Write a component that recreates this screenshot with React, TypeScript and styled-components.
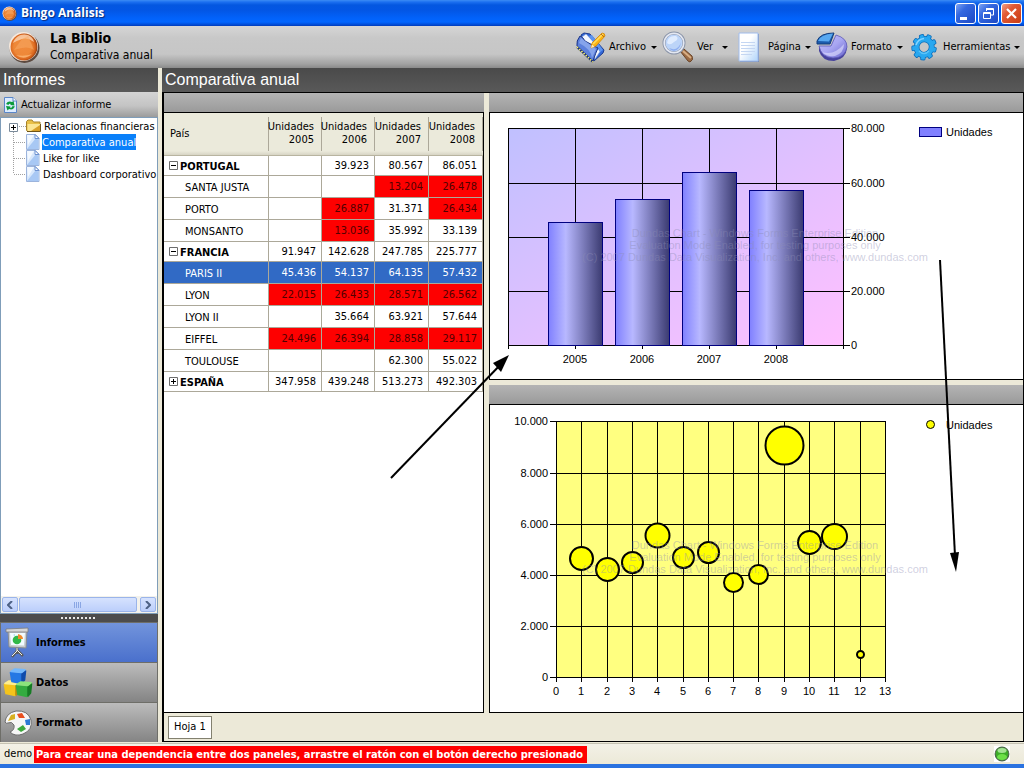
import React from 'react';
import styled, { createGlobalStyle, css } from 'styled-components';

const UI_FONT = '"DejaVu Sans Condensed", "DejaVu Sans", sans-serif';
const ARIAL = '"Liberation Sans", Arial, sans-serif';

const GlobalStyle = createGlobalStyle`
  * { box-sizing: border-box; }
  html, body { margin: 0; height: 100%; }
  body { font: 11px/14px ${UI_FONT}; color: #000; background: #ece9d8; }
  button { font: inherit; color: inherit; border: 0; padding: 0; margin: 0; background: none; cursor: default; }
`;

const Window = styled.div`
  position: relative;
  display: flex;
  flex-direction: column;
  min-height: 100vh;
  border-bottom: 4px solid #2a72e0;
  overflow: hidden;
`;

/* ---------- title bar ---------- */

const TitleBar = styled.header`
  display: flex;
  align-items: center;
  height: 26px;
  padding: 0 2px 0 2px;
  gap: 4px;
  background: linear-gradient(#3c8cf4 0, #1c70f0 2px, #0457e0 5px, #0356e4 10px, #0262fa 18px, #0266ff 22px, #0148d0 25px, #013ab8 26px);
`;

const WindowTitle = styled.h1`
  flex: 1;
  margin: 0;
  font: bold 12px/16px "Open Sans", sans-serif;
  color: #fff;
  text-shadow: 1px 1px 1px #0a2a7a;
`;

const WindowButtons = styled.div`
  display: flex;
  gap: 2px;
`;

const WindowButton = styled.button<{ $danger?: boolean }>`
  width: 21px;
  height: 21px;
  border: 1px solid #fff;
  border-radius: 3px;
  background: ${p => (p.$danger
    ? 'linear-gradient(135deg, #f0a088, #e25a36 35%, #c83c14)'
    : 'linear-gradient(135deg, #7da4f4, #3468e0 35%, #1c48c4)')};
  svg { display: block; }
`;

/* ---------- application header ---------- */

const AppHeader = styled.div`
  display: flex;
  align-items: center;
  height: 42px;
  padding-left: 8px;
  background: linear-gradient(#d6d6d6 0, #c8c8c8 12px, #c6c6c6 28px, #a2a2a2 38px, #8a8a8a 42px);
`;

const Heading = styled.div`
  flex: 1;
  padding: 0 0 2px 10px;
`;

const Company = styled.h2`
  margin: 0;
  font: bold 14px/18px ${UI_FONT};
`;

const ReportName = styled.p`
  margin: 0;
  font: 12px/16px ${UI_FONT};
`;

const MenuBar = styled.nav`
  display: flex;
`;

const MenuButton = styled.button<{ $width: number }>`
  display: flex;
  align-items: center;
  width: ${p => p.$width}px;
  height: 42px;
  padding-right: 4px;
`;

const MenuIcon = styled.span`
  display: flex;
  justify-content: center;
  width: 34px;
  margin-right: 2px;
`;

const MenuLabel = styled.span`
  flex: 1;
  text-align: left;
`;

const Caret = styled.span`
  border: 3px solid transparent;
  border-top-color: #000;
  border-bottom: 0;
`;

/* ---------- body ---------- */

const Body = styled.div`
  flex: 1;
  display: flex;
  gap: 4px;
`;

const SectionTitle = styled.h3`
  flex: none;
  height: 24px;
  margin: 0;
  padding-left: 3px;
  font: 16px/23px ${ARIAL};
  color: #fff;
  background: linear-gradient(#4a4a4a, #595959);
`;

const Sidebar = styled.aside`
  flex: 0 0 158px;
  display: flex;
  flex-direction: column;
  padding-bottom: 1px;
`;

const RefreshButton = styled.button`
  display: flex;
  align-items: center;
  gap: 4px;
  height: 25px;
  padding-left: 4px;
  background: linear-gradient(#d4d4d4, #c4c4c4 55%, #9c9c9c);
`;

const TreePanel = styled.div`
  flex: 1;
  display: flex;
  flex-direction: column;
  justify-content: space-between;
  border: 1px solid #7f9db9;
  background: #fff;
`;

const Tree = styled.ul`
  list-style: none;
  margin: 0;
  padding: 0 0 0 4px;
`;

const TreeRow = styled.li`
  display: flex;
  align-items: center;
  height: 16px;
`;

const TreeItem = styled.button<{ $selected?: boolean }>`
  height: 16px;
  line-height: 17px;
  padding: 0 0 0 3px;
  white-space: nowrap;
  ${p => p.$selected && css`
    margin-left: 2px;
    padding: 0;
    color: #fff;
    background: #0a80fa;
  `}
`;

const ScrollBar = styled.div`
  display: flex;
  gap: 1px;
  height: 17px;
  padding: 1px;
  background: #f3f2ec;
`;

const scrollFace = css`
  display: flex;
  align-items: center;
  justify-content: center;
  border: 1px solid #9ab4ea;
  border-radius: 2px;
  background: linear-gradient(#d6e2fe, #bccffb);
`;

const ScrollArrow = styled.button`
  ${scrollFace}
  width: 16px;
`;

const ScrollThumb = styled.div`
  ${scrollFace}
  flex: 1;
  margin-right: 2px;
`;

const Splitter = styled.div`
  display: flex;
  align-items: center;
  justify-content: center;
  height: 8px;
  background: #4c4c4c;
`;

const NavButton = styled.button<{ $active?: boolean }>`
  display: flex;
  align-items: center;
  gap: 3px;
  height: 40px;
  padding-left: 2px;
  border: 1px solid #6e6e68;
  border-bottom: 0;
  font-weight: bold;
  background: ${p => (p.$active
    ? 'linear-gradient(#7294dc, #4a70cc)'
    : 'linear-gradient(#bcbcbc, #848484)')};
`;

/* ---------- workspace ---------- */

const Main = styled.main`
  flex: 1;
  min-width: 0;
  display: flex;
  flex-direction: column;
  padding-bottom: 1px;
`;

const Workspace = styled.div`
  flex: 1;
  display: flex;
  flex-direction: column;
  border: 1px solid #000;
  border-left-width: 2px;
`;

const Panels = styled.div`
  flex: 1;
  display: grid;
  grid-template-columns: 320px minmax(0, 1fr);
  gap: 5px;
`;

const ChartColumn = styled.div`
  display: grid;
  grid-template-rows: 287fr 328fr;
  gap: 5px;
`;

const Panel = styled.section`
  display: flex;
  flex-direction: column;
  min-height: 0;
`;

const PanelGrip = styled.div`
  flex: none;
  height: 19px;
  background: linear-gradient(#b4b4b4, #9a9a9a);
`;

const PanelBody = styled.div<{ $side: 'left' | 'right' }>`
  flex: 1;
  min-height: 0;
  border: 1px solid #000;
  border-${p => p.$side}: 0;
  background: #fff;
`;

const ChartSvg = styled.svg`
  display: block;
  width: 100%;
  height: 100%;
`;

const SheetTabs = styled.div`
  display: flex;
  align-items: center;
  height: 28px;
  padding-left: 4px;
`;

const SheetTab = styled.button`
  height: 23px;
  padding: 0 5px;
  border: 1px solid #82806f;
  background: #fff;
`;

/* ---------- data grid ---------- */

const Grid = styled.table`
  width: 100%;
  table-layout: fixed;
  border-collapse: separate;
  border-spacing: 0;
`;

const HeaderCell = styled.th`
  height: 43px;
  padding: 0 8px 2px 0;
  text-align: right;
  font-weight: normal;
  line-height: 13px;
  border-bottom: 1px solid #b8b4a0;
  background:
    linear-gradient(#aca899, #aca899) 100% 4px / 1px 34px no-repeat,
    linear-gradient(#ebeadb 38px, #d2cfbf 43px);
  &:first-child { text-align: left; padding-left: 6px; }
`;

const ColumnTitle = styled.span`
  display: flex;
  flex-direction: column;
  align-items: flex-end;
`;

const GridRow = styled.tr<{ $group?: boolean; $selected?: boolean }>`
  height: ${p => (p.$group ? 20 : 22)}px;
  ${p => p.$selected && css`
    color: #fff;
    background: #316ac5;
  `}
`;

const NameCell = styled.th<{ $group?: boolean }>`
  padding: 3px 0 0 ${p => (p.$group ? 5 : 21)}px;
  text-align: left;
  font-weight: ${p => (p.$group ? 'bold' : 'normal')};
  line-height: 14px;
  border: solid #aca899;
  border-width: 0 1px 1px 0;
`;

const NameContent = styled.span`
  display: flex;
  align-items: center;
  gap: 2px;
`;

const Toggle = styled.button`
  width: 9px;
  height: 9px;
  margin-bottom: 3px;
  svg { display: block; }
`;

const ValueCell = styled.td<{ $alert?: boolean }>`
  padding: 1px 5px 0 0;
  text-align: right;
  border: solid #aca899;
  border-width: 0 1px 1px 0;
  ${p => p.$alert && css`
    color: #520000;
    background: #fe0000;
  `}
`;

/* ---------- status bar ---------- */

const StatusBar = styled.footer`
  display: flex;
  align-items: center;
  height: 21px;
  padding: 0 14px 0 4px;
  gap: 2px;
  border-top: 1px solid #c5c2b2;
  background: linear-gradient(#f3f1e6, #ece9d8);
`;

const StatusHint = styled.strong`
  height: 17px;
  padding: 0 4px 0 2px;
  line-height: 17px;
  color: #fff;
  background: #f00;
`;

const StatusSpacer = styled.div`
  flex: 1;
`;

/* Dependency arrows are drawn above every panel. */
const ArrowLayer = styled.svg`
  position: absolute;
  top: 0;
  left: 0;
  pointer-events: none;
`;

/* ---------- icons ---------- */

const OrangeBall = ({ size }: { size: number }) => (
  <svg width={size} height={size} viewBox="0 0 32 32">
    <defs>
      <radialGradient id="ball" cx="0.45" cy="0.5" r="0.55">
        <stop offset="0" stopColor="#f08a3c" />
        <stop offset="0.6" stopColor="#ee8838" />
        <stop offset="0.85" stopColor="#d8641c" />
        <stop offset="1" stopColor="#8a3c14" />
      </radialGradient>
    </defs>
    <circle cx="16.5" cy="17" r="15" fill="#5c4a40" />
    <circle cx="15.5" cy="15.5" r="14.5" fill="#f6e8dc" />
    <circle cx="16" cy="16" r="13.4" fill="url(#ball)" />
    <path d="M5 12C7 5 14 2 20 4Q25 6 26 11 20 6 14 8 8 10 5 12Z" fill="#fbd4b4" opacity=".8" />
    <path d="M6 19L14 8 20 5 26 19Q20 14 6 19Z" fill="#f8ac68" opacity=".5" />
    <path d="M8 24Q16 30 24 23 16 26 8 24Z" fill="#ffc080" opacity=".7" />
  </svg>
);

const NotebookIcon = () => (
  <svg width="31" height="31" viewBox="0 0 31 31" strokeLinejoin="round">
    <path d="M6 3L9 1 15 2 29 18 28 21 19 29Z" fill="#3468d8" stroke="#1c3c90" />
    <path d="M7 5L11 2 26 18 20 27Z" fill="#f4f8ff" stroke="#8ca4d8" strokeWidth=".6" />
    <path d="M14 4L17 3 28 18 25 20Z" fill="#5c94f0" />
    <path d="M5 4Q8 5 10 9L23 16Q21 20 18 29L2 14Q1 9 5 4Z" fill="#5c80dc" stroke="#1c3484" />
    <path d="M6 6L21 17 17 26Q16 17 4 11Z" fill="#94b0f0" opacity=".75" />
    <path d="M2 15L18 30" stroke="#1c3070" strokeWidth="2" />
    <path d="M2 15L18 30" stroke="#f4ec70" strokeWidth="1.800" strokeDasharray="1.400 1.600" />
    <path d="M16 16L17 11 27 1Q30 1 30 4L21 14Z" fill="#fdb414" stroke="#d08408" strokeWidth=".8" />
    <path d="M18 12L28 2" stroke="#ffdc60" strokeWidth="1.600" />
    <path d="M26 2L29 5" stroke="#b4701c" />
    <path d="M16 16L17 12.500 19.500 14.800Z" fill="#fbe8c4" />
  </svg>
);

const MagnifierIcon = () => (
  <svg width="32" height="32" viewBox="0 0 32 32">
    <path d="M18 20L22 18 30 25Q32 29 28 31L26 30Z" fill="#9a6a44" stroke="#6a4428" />
    <path d="M21 20L29 27" stroke="#d8ae84" strokeWidth="2" />
    <path d="M17 17L20 20" stroke="#a4a8b4" strokeWidth="4" />
    <circle cx="12" cy="12" r="10" fill="#bcd4f8" stroke="#8a94a8" strokeWidth="3" />
    <circle cx="12" cy="12" r="9.800" fill="none" stroke="#e4e8f2" strokeWidth="1.600" />
    <path d="M5 12Q6 4 14 5 18 8 12 11 8 15 5 12Z" fill="#e6f0ff" opacity=".85" />
    <path d="M7 17Q16 21 19 11 18 19 12 20 9 20 7 17Z" fill="#8eaef0" />
  </svg>
);

const PageIcon = () => (
  <svg width="22" height="31" viewBox="0 0 22 31">
    <defs>
      <linearGradient id="page" x1="0" y1="0" x2="1" y2="1">
        <stop offset="0.4" stopColor="#fff" />
        <stop offset="1" stopColor="#b0d4fa" />
      </linearGradient>
    </defs>
    <path d="M2 2H21V30H2Z" fill="#7c90b8" />
    <path d="M1 1H20V29H1Z" fill="url(#page)" stroke="#a0bcec" />
    <path d="M3 10.500H17M3 13.500H17M3 16.500H17M3 19.500H17M3 22.500H14" stroke="#c4d6f2" />
  </svg>
);

const PieIcon = () => (
  <svg width="32" height="30" viewBox="0 0 32 30">
    <defs>
      <linearGradient id="pie" x1="0" y1="0" x2="1" y2="1">
        <stop offset="0" stopColor="#c4c2fa" />
        <stop offset="0.5" stopColor="#a8a6f2" />
        <stop offset="1" stopColor="#6864cc" />
      </linearGradient>
    </defs>
    <path d="M3 15V19Q6 29 18 29 30 27 31 16Z" fill="#46429c" />
    <path d="M15 14L20 3Q31 6 31 15 29 26 17 26 5 25 3 14Z" fill="url(#pie)" stroke="#5c58b8" strokeWidth=".8" />
    <path d="M1 12V9Q4 1 18 1L14 12Z" fill="#1c5cac" stroke="#123c7c" />
    <path d="M2 9Q5 2 17 1.500L13 9.500Z" fill="#58a8f0" />
    <path d="M6 20Q18 24 28 12 28 21 19 24 11 25 6 20Z" fill="#dcdafe" opacity=".65" />
  </svg>
);

const GEAR_TEETH = Array.from({ length: 9 }, (_, i) => i * 40);

const GearIcon = () => (
  <svg width="28" height="28" viewBox="0 0 28 28">
    <g transform="rotate(25 14 14) translate(1 0) scale(.94 1)">
      {GEAR_TEETH.map(a => (
        <rect key={a} x="11.200" y=".6" width="5.600" height="6" rx="1.500" fill="#0c6cb8" transform={`rotate(${a} 14 14)`} />
      ))}
      <circle cx="14" cy="14" r="8" fill="none" stroke="#0c70bc" strokeWidth="6.200" />
      {GEAR_TEETH.map(a => (
        <rect key={a} x="12" y="1.400" width="4" height="6" rx="1" fill="#28a8f0" transform={`rotate(${a} 14 14)`} />
      ))}
      <circle cx="14" cy="14" r="8" fill="none" stroke="#28a8f0" strokeWidth="4.600" />
    </g>
    <path d="M6 12Q8 6 14 5.500" fill="none" stroke="#84d4ff" strokeWidth="1.600" />
    <path d="M9 18Q14 23 19 18" fill="none" stroke="#5cc4fa" strokeWidth="1.400" />
  </svg>
);

const RefreshIcon = () => (
  <svg width="13" height="16" viewBox="0 0 13 16">
    <path d="M.5.5H9L12.500 4V15.500H.5Z" fill="#dcebff" stroke="#5a86c8" />
    <path d="M9 .5V4H12.500" fill="#fff" stroke="#5a86c8" />
    <path d="M2 7Q4 3.500 8 5L9.500 4 10.500 8.500 6 8 7 7Q5 6 4.500 8Z" fill="#0a9a3a" />
    <path d="M11 9.500Q9 13.500 5 12L3.500 13.500 2 9 6.500 9.500 6 10.500Q8 11.500 8.500 9Z" fill="#0a9a3a" />
  </svg>
);

const TreeGuide = ({ root, last }: { root?: boolean; last?: boolean }) => (
  <svg width="21" height="16" viewBox="0 0 21 16">
    <path d={`M8.500 ${root ? 12 : 0}V${last ? 8 : 16}M${root ? 14 : 9} 8.500H21`} stroke="#a0a0a0" strokeDasharray="1 1" />
    {root && (
      <>
        <path d="M4.500 5.500H12.500V13.500H4.500Z" fill="#fff" stroke="#7a8a9a" />
        <path d="M6 9.500H11M8.500 7V12" stroke="#000" />
      </>
    )}
  </svg>
);

const FolderIcon = () => (
  <svg width="15" height="14" viewBox="0 0 15 14">
    <path d="M.5 11V2.500L2 1H6L7.500 3H14V12H1Z" fill="#e8c048" stroke="#a8842c" />
    <path d="M1.500 5H14V12H1.500Z" fill="#fbe694" />
    <path d="M5 12L14 6V12Z" fill="#d8a028" />
    <path d="M1 12.500H14.500V5" fill="none" stroke="#6e5418" />
  </svg>
);

const DocIcon = () => (
  <svg width="14" height="16" viewBox="0 0 14 16">
    <path d="M.5.5H9.500L13 4V15.500H.5Z" fill="#d8e8fc" stroke="#9cb4dc" />
    <path d="M1 15L10 4 12.500 6V15Z" fill="#a8c8f4" />
    <path d="M1 1H8L2 11Z" fill="#f4f9ff" />
    <path d="M9 .5V4.500H13Z" fill="#fff" stroke="#6e92d0" />
  </svg>
);

const EaselIcon = () => (
  <svg width="30" height="34" viewBox="0 0 30 34">
    <path d="M14 21V25L9 31M14 24L20 30M14 24V28" stroke="#5c5c5c" strokeWidth="2.500" fill="none" />
    <path d="M14 22V25L9 30M14 24L19 29" stroke="#f0f0f0" fill="none" />
    <path d="M5 5H24L23 22 6 21Z" fill="#c8ccd0" stroke="#888c90" />
    <path d="M7 7H22L21 19.500 8 19Z" fill="#f2fcff" />
    <path d="M3 3L25 2V6L3 6Z" fill="#d6d6d6" stroke="#7c7c7c" strokeWidth=".8" />
    <circle cx="14" cy="14" r="4.300" fill="#30b848" />
    <path d="M15 13V8Q20 9 20 13Z" fill="#f08a2c" />
    <path d="M10 9L12 8V10Z" fill="#a8d8f0" />
  </svg>
);

const Cube = ({ x, y, c }: { x: number; y: number; c: [string, string, string] }) => (
  <g transform={`translate(${x} ${y})`} strokeLinejoin="round" strokeWidth="1.600">
    <path d="M1.500 4.500L12 5.500 12 15.500 3 13.500Z" fill={c[0]} stroke={c[0]} />
    <path d="M13 5.500L16.500 3 15.500 12 13 15Z" fill={c[1]} stroke={c[1]} />
    <path d="M2 3.500L6 1 16 1.800 12.500 4.500Z" fill={c[2]} stroke={c[2]} />
  </g>
);

const CubesIcon = () => (
  <svg width="30" height="32" viewBox="0 0 30 32">
    <Cube x={0} y={13} c={['#f4c41c', '#c08c08', '#ffee8c']} />
    <Cube x={6} y={1} c={['#2478e4', '#104cac', '#74b8fc']} />
    <Cube x={12} y={14} c={['#34ac40', '#167c24', '#8ce47c']} />
  </svg>
);

const PaletteIcon = () => (
  <svg width="30" height="28" viewBox="0 0 30 28">
    <path d="M2 13Q3 4 13 2 25 1 28 11 30 21 20 25 12 28 7 23 12 21 11 16 9 12 5 14 3 15 2 13Z" fill="#f6f6f6" stroke="#6e6e6e" />
    <path d="M5 12L8 6 12 5 12 10Z" fill="#d8b020" />
    <path d="M14 5L19 4 22 9 16 9Z" fill="#e85020" />
    <path d="M22 11L27 10 27 16 23 16Z" fill="#2c78d4" />
    <path d="M14 20L20 16 23 20 18 23Z" fill="#3ca83c" />
  </svg>
);

const StatusLight = () => (
  <svg width="16" height="16" viewBox="0 0 16 16">
    <rect width="16" height="16" fill="#fff" />
    <circle cx="8" cy="8" r="6.800" fill="#3cac28" stroke="#4c6a48" strokeWidth="1.200" />
    <ellipse cx="8" cy="11" rx="5" ry="3" fill="#6ce048" />
    <ellipse cx="8" cy="4.500" rx="4.500" ry="2.500" fill="#a4e494" />
  </svg>
);

const ToggleIcon = ({ open }: { open: boolean }) => (
  <svg width="9" height="9" viewBox="0 0 9 9">
    <path d="M.5.5H8.500V8.500H.5Z" fill="#fff" stroke="#6c6c6c" />
    <path d={open ? 'M2 4.500H7' : 'M2 4.500H7M4.500 2V7'} stroke="#000" />
  </svg>
);

const Chevron = ({ d }: { d: string }) => (
  <svg width="6" height="8" viewBox="0 0 6 8"><path d={d} fill="none" stroke="#4d6185" strokeWidth="2" /></svg>
);

/* ---------- data ---------- */

const menus = [
  { label: 'Archivo', width: 88, icon: <NotebookIcon /> },
  { label: 'Ver', width: 71, icon: <MagnifierIcon /> },
  { label: 'Página', width: 83, icon: <PageIcon /> },
  { label: 'Formato', width: 92, icon: <PieIcon /> },
  { label: 'Herramientas', width: 117, icon: <GearIcon /> },
];

const years = ['2005', '2006', '2007', '2008'];

type Row = { name: string; group?: 'open' | 'closed'; selected?: boolean; values: string[] };

const rows: Row[] = [
  { name: 'PORTUGAL', group: 'open', values: ['', '39.923', '80.567', '86.051'] },
  { name: 'SANTA JUSTA', values: ['', '', '13.204', '26.478'] },
  { name: 'PORTO', values: ['', '26.887', '31.371', '26.434'] },
  { name: 'MONSANTO', values: ['', '13.036', '35.992', '33.139'] },
  { name: 'FRANCIA', group: 'open', values: ['91.947', '142.628', '247.785', '225.777'] },
  { name: 'PARIS II', selected: true, values: ['45.436', '54.137', '64.135', '57.432'] },
  { name: 'LYON', values: ['22.015', '26.433', '28.571', '26.562'] },
  { name: 'LYON II', values: ['', '35.664', '63.921', '57.644'] },
  { name: 'EIFFEL', values: ['24.496', '26.394', '28.858', '29.117'] },
  { name: 'TOULOUSE', values: ['', '', '62.300', '55.022'] },
  { name: 'ESPAÑA', group: 'closed', values: ['347.958', '439.248', '513.273', '492.303'] },
];

const ALERT_LIMIT = 30;
const isAlert = (v: string) => v !== '' && Number(v) < ALERT_LIMIT;

/* ---------- charts ---------- */

const Watermark = ({ x, y }: { x: number; y: number }) => (
  <g fill="#8c8cb4" fillOpacity=".42" fontSize="11" textAnchor="middle">
    <text x={x} y={y}>Dundas Chart - Windows Forms Enterprise Edition</text>
    <text x={x} y={y + 12}>Evaluation Mode Enabled, for testing purposes only</text>
    <text x={x} y={y + 24}>(C) 2007 Dundas Data Visualization, Inc. and others, www.dundas.com</text>
  </g>
);

const BarChart = () => {
  const left = 18;
  const right = 353;
  const top = 15;
  const bottom = 232;
  const step = 67;
  const bars = [45436, 54137, 64135, 57432];
  const ticks = ['0', '20.000', '40.000', '60.000', '80.000'];
  const yOf = (v: number) => Math.ceil(bottom - (v / 80000) * (bottom - top));
  return (
    <ChartSvg viewBox="0 0 533 266" preserveAspectRatio="xMinYMin meet" fontFamily={ARIAL} fontSize="11">
      <defs>
        <linearGradient id="plot" x1="0" y1="0" x2="1" y2="1">
          <stop offset="0" stopColor="#c0c0ff" />
          <stop offset="1" stopColor="#ffc0ff" />
        </linearGradient>
        <linearGradient id="cylinder">
          <stop offset="0" stopColor="#8080ff" />
          <stop offset="0.32" stopColor="#b8b8ff" />
          <stop offset="1" stopColor="#3a3a70" />
        </linearGradient>
      </defs>
      <rect x={left} y={top} width={right - left} height={bottom - top} fill="url(#plot)" />
      <g fill="none" stroke="#000" shapeRendering="crispEdges">
        {ticks.map((t, i) => <path key={t} d={`M${left} ${yOf(i * 20000) + 0.5}H${right + 7}`} />)}
        {[0, 1, 2, 3, 4, 5].map(i => <path key={i} d={`M${left + i * step + 0.5} ${top}V${bottom + 4}`} />)}
      </g>
      {bars.map((v, i) => (
        <rect key={v} x={left + (i + 1) * step - 26.5} y={yOf(v) + 0.5} width="54" height={bottom - yOf(v)} fill="url(#cylinder)" stroke="#000080" />
      ))}
      <Watermark x={265} y={124} />
      {ticks.map((t, i) => <text key={t} x={right + 8} y={yOf(i * 20000) + 4}>{t}</text>)}
      {years.map((t, i) => <text key={t} textAnchor="middle" x={left + (i + 1) * step} y="250">{t}</text>)}
      <rect x="429.500" y="14.500" width="22" height="9" fill="#8080ff" stroke="#000080" />
      <text x="456" y="23">Unidades</text>
    </ChartSvg>
  );
};

const bubbles: [number, number, number][] = [
  [1, 4660, 11.5], [2, 4240, 11.5], [3, 4500, 10.5], [4, 5560, 12], [5, 4700, 10.5], [6, 4920, 10.5],
  [7, 3740, 9.5], [8, 4060, 9.5], [9, 9100, 19], [10, 5280, 11.5], [11, 5520, 12.5], [12, 930, 3.5],
];

const BubbleChart = () => {
  const left = 66;
  const right = 395;
  const top = 16;
  const bottom = 272;
  const xOf = (v: number) => Math.round(left + (v * (right - left)) / 13);
  const yOf = (v: number) => Math.ceil(bottom - (v / 10000) * (bottom - top));
  const ticks = ['0', '2.000', '4.000', '6.000', '8.000', '10.000'];
  const months = Array.from({ length: 14 }, (_, i) => i);
  return (
    <ChartSvg viewBox="0 0 533 307" preserveAspectRatio="xMinYMin meet" fontFamily={ARIAL} fontSize="11">
      <rect x={left} y={top} width={right - left} height={bottom - top} fill="#ffff80" />
      <g fill="none" stroke="#000" shapeRendering="crispEdges">
        {ticks.map((t, i) => <path key={t} d={`M${left - 6} ${yOf(i * 2000) + 0.5}H${right + 1}`} />)}
        {months.map(m => <path key={m} d={`M${xOf(m) + 0.5} ${top}V${bottom + 5}`} />)}
      </g>
      {bubbles.map(([m, v, r]) => (
        <circle key={m} cx={xOf(m) + 0.5} cy={yOf(v) + 0.5} r={r} fill="#ff0" stroke="#000" strokeWidth="2" />
      ))}
      <Watermark x={265} y={144} />
      {ticks.map((t, i) => <text key={t} textAnchor="end" x={left - 8} y={yOf(i * 2000) + 4}>{t}</text>)}
      {months.map(m => <text key={m} textAnchor="middle" x={xOf(m)} y="290">{m}</text>)}
      <circle cx="440.500" cy="19.500" r="4" fill="#ff0" stroke="#000" />
      <text x="456" y="24">Unidades</text>
    </ChartSvg>
  );
};

/* ---------- app ---------- */

export default function App() {
  return (
    <Window>
      <GlobalStyle />
      <TitleBar>
        <OrangeBall size={15} />
        <WindowTitle>Bingo Análisis</WindowTitle>
        <WindowButtons>
          <WindowButton aria-label="Minimizar">
            <svg width="19" height="19"><path d="M4 13H11V16H4Z" fill="#fff" /></svg>
          </WindowButton>
          <WindowButton aria-label="Restaurar">
            <svg width="19" height="19" fill="none" stroke="#fff">
              <path d="M7 4.500H14.500V11H12M7.500 7V4M7 5.500H14" />
              <path d="M4.500 8.500H11.500V14.500H4.500ZM4 9.500H12" />
            </svg>
          </WindowButton>
          <WindowButton $danger aria-label="Cerrar">
            <svg width="19" height="19"><path d="M5 5L14 14M14 5L5 14" stroke="#fff" strokeWidth="2.200" /></svg>
          </WindowButton>
        </WindowButtons>
      </TitleBar>

      <AppHeader>
        <OrangeBall size={32} />
        <Heading>
          <Company>La Biblio</Company>
          <ReportName>Comparativa anual</ReportName>
        </Heading>
        <MenuBar>
          {menus.map(m => (
            <MenuButton key={m.label} $width={m.width}>
              <MenuIcon>{m.icon}</MenuIcon>
              <MenuLabel>{m.label}</MenuLabel>
              <Caret />
            </MenuButton>
          ))}
        </MenuBar>
      </AppHeader>

      <Body>
        <Sidebar>
          <SectionTitle>Informes</SectionTitle>
          <RefreshButton><RefreshIcon />Actualizar informe</RefreshButton>
          <TreePanel>
            <Tree>
              <TreeRow><TreeGuide root /><FolderIcon /><TreeItem>Relacionas financieras</TreeItem></TreeRow>
              <TreeRow><TreeGuide /><DocIcon /><TreeItem $selected>Comparativa anual</TreeItem></TreeRow>
              <TreeRow><TreeGuide /><DocIcon /><TreeItem>Like for like</TreeItem></TreeRow>
              <TreeRow><TreeGuide last /><DocIcon /><TreeItem>Dashboard corporativo</TreeItem></TreeRow>
            </Tree>
            <ScrollBar>
              <ScrollArrow aria-label="Desplazar a la izquierda"><Chevron d="M5 0L1 4 5 8" /></ScrollArrow>
              <ScrollThumb>
                <svg width="8" height="6"><path d="M.5 0V6M2.500 0V6M4.500 0V6M6.500 0V6" stroke="#8aa6e4" /></svg>
              </ScrollThumb>
              <ScrollArrow aria-label="Desplazar a la derecha"><Chevron d="M1 0L5 4 1 8" /></ScrollArrow>
            </ScrollBar>
          </TreePanel>
          <Splitter>
            <svg width="36" height="2"><path d="M0 1H36" stroke="#e8e8e8" strokeWidth="2" strokeDasharray="2 2" /></svg>
          </Splitter>
          <NavButton $active><EaselIcon />Informes</NavButton>
          <NavButton><CubesIcon />Datos</NavButton>
          <NavButton><PaletteIcon />Formato</NavButton>
        </Sidebar>

        <Main>
          <SectionTitle>Comparativa anual</SectionTitle>
          <Workspace>
            <Panels>
              <Panel>
                <PanelGrip />
                <PanelBody $side="left">
                  <Grid>
                    <colgroup>
                      <col />
                      <col width="53" />
                      <col width="53" />
                      <col width="54" />
                      <col width="54" />
                    </colgroup>
                    <thead>
                      <tr>
                        <HeaderCell scope="col">País</HeaderCell>
                        {years.map(y => (
                          <HeaderCell key={y} scope="col">
                            <ColumnTitle><span>Unidades</span><span>{y}</span></ColumnTitle>
                          </HeaderCell>
                        ))}
                      </tr>
                    </thead>
                    <tbody>
                      {rows.map(r => (
                        <GridRow key={r.name} $group={!!r.group} $selected={r.selected}>
                          <NameCell scope="row" $group={!!r.group}>
                            <NameContent>
                              {r.group && (
                                <Toggle aria-label={r.group === 'open' ? 'Contraer' : 'Expandir'}>
                                  <ToggleIcon open={r.group === 'open'} />
                                </Toggle>
                              )}
                              {r.name}
                            </NameContent>
                          </NameCell>
                          {r.values.map((v, i) => (
                            <ValueCell key={years[i]} $alert={isAlert(v)}>{v}</ValueCell>
                          ))}
                        </GridRow>
                      ))}
                    </tbody>
                  </Grid>
                </PanelBody>
              </Panel>
              <ChartColumn>
                <Panel>
                  <PanelGrip />
                  <PanelBody $side="right"><BarChart /></PanelBody>
                </Panel>
                <Panel>
                  <PanelGrip />
                  <PanelBody $side="right"><BubbleChart /></PanelBody>
                </Panel>
              </ChartColumn>
            </Panels>
            <SheetTabs><SheetTab>Hoja 1</SheetTab></SheetTabs>
          </Workspace>
        </Main>
      </Body>

      <StatusBar>
        <span>demo</span>
        <StatusHint>Para crear una dependencia entre dos paneles, arrastre el ratón con el botón derecho presionado</StatusHint>
        <StatusSpacer />
        <StatusLight />
      </StatusBar>

      <ArrowLayer width="1000" height="600" viewBox="0 0 1000 600">
        <g stroke="#000" strokeWidth="2">
          <path d="M391 478L503 362" />
          <path d="M940 260L955 556" />
        </g>
        <path d="M509 355L501 372 493 363Z" />
        <path d="M956 572L950 553 959 552Z" />
      </ArrowLayer>
    </Window>
  );
}
